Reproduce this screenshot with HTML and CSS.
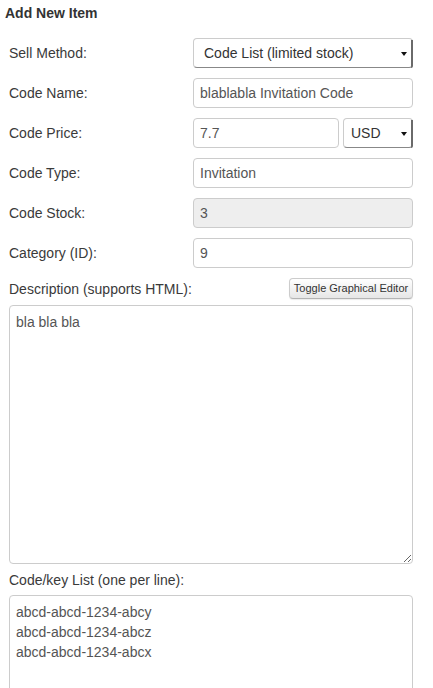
FILE: index.html
```html
<!DOCTYPE html>
<html>
<head>
<meta charset="utf-8">
<link rel="stylesheet" href="styles.css">
</head>
<body>
<div class="page">
  <h3 class="title">Add New Item</h3>
  <form class="form">
    <div class="row">
      <label class="label">Sell Method:</label>
      <div class="select-wrap select-wide">
        <select class="select select-method">
          <option>Code List (limited stock)</option>
        </select>
      </div>
    </div>
    <div class="row">
      <label class="label">Code Name:</label>
      <input class="input" type="text" value="blablabla Invitation Code">
    </div>
    <div class="row">
      <label class="label">Code Price:</label>
      <div class="price">
        <input class="input input-price" type="text" value="7.7">
        <div class="select-wrap select-currency">
          <select class="select select-usd">
            <option>USD</option>
          </select>
        </div>
      </div>
    </div>
    <div class="row">
      <label class="label">Code Type:</label>
      <input class="input" type="text" value="Invitation">
    </div>
    <div class="row">
      <label class="label">Code Stock:</label>
      <input class="input input-disabled" type="text" value="3" disabled>
    </div>
    <div class="row">
      <label class="label">Category (ID):</label>
      <input class="input" type="text" value="9">
    </div>
    <div class="desc-head">
      <label class="label">Description (supports HTML):</label>
      <button class="btn" type="button">Toggle Graphical Editor</button>
    </div>
    <textarea class="textarea desc">bla bla bla</textarea>
    <label class="label list-label">Code/key List (one per line):</label>
    <textarea class="textarea codes">abcd-abcd-1234-abcy
abcd-abcd-1234-abcz
abcd-abcd-1234-abcx</textarea>
  </form>
</div>
</body>
</html>
```
FILE: styles.css
```css
* {
  box-sizing: border-box;
}
html, body {
  margin: 0;
  padding: 0;
  background: #fff;
}
body {
  font-family: "Liberation Sans", Arial, sans-serif;
  font-size: 14px;
  line-height: 20px;
  color: #333;
}
.page {
  padding: 3px 0 0 5px;
}
.title {
  margin: 0;
  font-size: 14px;
  line-height: 20px;
  font-weight: bold;
  color: #333;
}
.form {
  margin: 15px 0 0 4px;
  width: 404px;
  display: flex;
  flex-direction: column;
}
.row {
  display: flex;
  align-items: center;
  height: 30px;
  margin-bottom: 10px;
}
.label {
  width: 184px;
  flex: none;
  color: #3a3a3a;
  font-size: 14px;
  line-height: 20px;
}
.input {
  width: 220px;
  height: 30px;
  border: 1px solid #ccc;
  border-radius: 4px;
  padding: 4px 6px;
  font-family: inherit;
  font-size: 14px;
  line-height: 20px;
  color: #555;
  background: #fff;
  outline: none;
  margin: 0;
}
.input-disabled {
  background: #eee;
  color: #555;
  -webkit-text-fill-color: #555;
  opacity: 1;
}
.price {
  display: flex;
  gap: 4px;
  width: 220px;
}
.input-price {
  width: 146px;
}
.select-wrap {
  position: relative;
  height: 30px;
}
.select-wide {
  width: 220px;
}
.select-currency {
  width: 70px;
}
.select-wrap::after {
  content: "";
  position: absolute;
  right: 6px;
  top: 14px;
  border-left: 3px solid transparent;
  border-right: 3px solid transparent;
  border-top: 4px solid #111;
  pointer-events: none;
}
.select-wrap::before {
  content: "";
  position: absolute;
  right: 0;
  top: 2px;
  bottom: 0;
  width: 2px;
  background: #6a6a6a;
  border-radius: 0 0 3px 0;
  z-index: 1;
  pointer-events: none;
}
.select {
  -webkit-appearance: none;
  appearance: none;
  width: 100%;
  height: 30px;
  border: 1px solid #ccc;
  border-bottom-color: #888;
  border-radius: 4px;
  background: #fff;
  font-family: inherit;
  font-size: 14px;
  line-height: 20px;
  color: #333;
  margin: 0;
  outline: none;
}
.select-method {
  padding: 4px 20px 4px 10px;
}
.select-usd {
  padding: 4px 14px 4px 7px;
}
.desc-head {
  display: flex;
  align-items: center;
  justify-content: space-between;
  height: 21px;
  margin-bottom: 6px;
}
.desc-head .label {
  width: auto;
}
.btn {
  height: 21px;
  width: 124px;
  margin: 0;
  padding: 0;
  white-space: nowrap;
  border: 1px solid #ccc;
  border-bottom-color: #b3b3b3;
  border-radius: 4px;
  background: linear-gradient(#ffffff, #e6e6e6);
  font-family: inherit;
  font-size: 11px;
  line-height: 17px;
  color: #333;
  box-shadow: 0 1px 1px rgba(0, 0, 0, 0.08);
}
.textarea {
  display: block;
  width: 404px;
  border: 1px solid #ccc;
  border-radius: 4px;
  padding: 6px;
  font-family: inherit;
  font-size: 14px;
  line-height: 20px;
  color: #555;
  background: #fff;
  outline: none;
  margin: 0;
  resize: vertical;
}
.desc {
  height: 259px;
}
.list-label {
  width: auto;
  margin-top: 6px;
  margin-bottom: 5px;
}
.codes {
  height: 130px;
  padding-top: 6px;
}
```
